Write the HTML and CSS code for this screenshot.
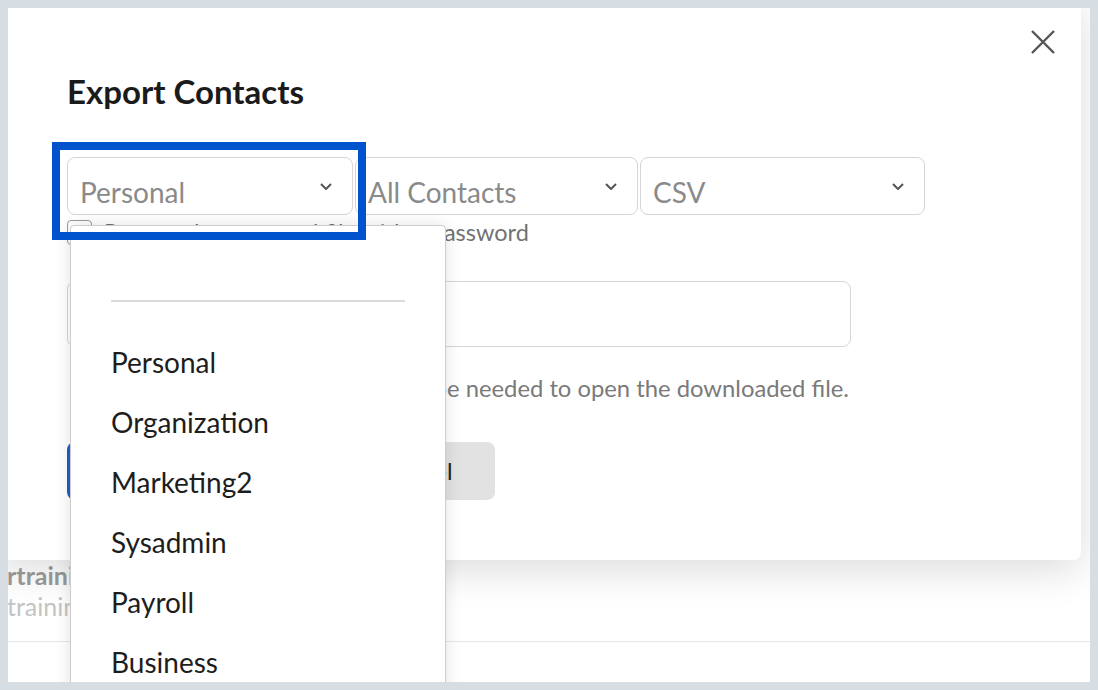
FILE: index.html
```html
<!DOCTYPE html>
<html lang="en">
<head>
<meta charset="UTF-8">
<meta name="viewport" content="width=device-width, initial-scale=1.0">
<title>Export Contacts</title>
<link rel="stylesheet" href="styles.css">
</head>
<body>

<div class="screen">

  <div class="contacts">
    <div class="contact-row">
      <div class="contact-name">rtraining</div>
      <div class="contact-mail">training@zylker.com</div>
    </div>
  </div>

  <div class="modal">
    <div class="modal-top">
      <button class="close-btn" aria-label="Close">
        <svg width="24" height="24" viewBox="0 0 24 24"><path d="M1 1L23 23M23 1L1 23" stroke="#555" stroke-width="2.4" fill="none"/></svg>
      </button>
    </div>

    <h1 class="modal-title">Export Contacts</h1>

    <div class="select-row">
      <div class="select select-open">
        <span>Personal</span>
        <svg class="chevron" width="12" height="7" viewBox="0 0 12 7"><path d="M1 1l5 5 5-5" stroke="#555" stroke-width="2" fill="none"/></svg>

        <div class="dropdown">
          <div class="dropdown-search"></div>
          <ul class="dropdown-list">
            <li>Personal</li>
            <li>Organization</li>
            <li>Marketing2</li>
            <li>Sysadmin</li>
            <li>Payroll</li>
            <li>Business</li>
          </ul>
        </div>
        <div class="focus-mark"></div>
      </div>
      <div class="select">
        <span>All Contacts</span>
        <svg class="chevron" width="12" height="7" viewBox="0 0 12 7"><path d="M1 1l5 5 5-5" stroke="#555" stroke-width="2" fill="none"/></svg>
      </div>
      <div class="select">
        <span>CSV</span>
        <svg class="chevron" width="12" height="7" viewBox="0 0 12 7"><path d="M1 1l5 5 5-5" stroke="#555" stroke-width="2" fill="none"/></svg>
      </div>
    </div>

    <label class="check-row">
      <span class="checkbox"></span>
      <span>Protect the exported file with a password</span>
    </label>

    <input class="password-input" type="password">

    <p class="hint">Remember this password as it will be needed to open the downloaded file.</p>

    <div class="actions">
      <button class="btn btn-primary">Export</button>
      <button class="btn btn-cancel">Cancel</button>
    </div>
  </div>

</div>

</body>
</html>
```

FILE: styles.css
```css
body {
  margin: 0;
  padding: 8px;
  background-color: #d6dee4;
  font-family: Lato, "Open Sans", sans-serif;
}

.screen {
  position: relative;
  width: 1082px;
  height: 674px;
  background-color: #fff;
  overflow: hidden;
}

/* page behind the dialog */
.contacts {
  padding-top: 552px;
}
.contact-row {
  padding: 0 0 18px 0;
  margin-left: -1px;
  border-bottom: 1px solid #e6e6e6;
}
.contact-name {
  font-size: 25px;
  line-height: 30px;
  font-weight: bold;
  color: #9c9c9c;
}
.contact-mail {
  font-size: 25px;
  line-height: 33px;
  color: #c4c4c4;
}

/* dialog */
.modal {
  position: absolute;
  left: -12px;
  top: -12px;
  width: 1085px;
  box-sizing: border-box;
  padding: 34px 26px 60px 71px;
  background-color: #fff;
  border-radius: 8px;
  box-shadow: 0 10px 40px rgba(0, 0, 0, 0.14);
}

.modal-top {
  display: flex;
  justify-content: flex-end;
  height: 24px;
}
.close-btn {
  padding: 0;
  border: none;
  background: none;
  width: 24px;
  height: 24px;
}
.close-btn svg {
  display: block;
}

.modal-title {
  margin: 17px 0 0 0;
  font-size: 33px;
  line-height: 40px;
  font-weight: bold;
  color: #1b1b1b;
}

.select-row {
  display: flex;
  gap: 2px;
  margin-top: 46px;
}
.select {
  display: flex;
  justify-content: space-between;
  align-items: flex-start;
  width: 286px;
  height: 58px;
  box-sizing: border-box;
  padding: 17px 12px 0 12px;
  border: 1px solid #d6d6d6;
  border-radius: 8px;
  font-size: 28px;
  line-height: 34px;
  color: #8a8a8a;
}
.select:nth-child(2) {
  width: 283px;
}
.select:nth-child(3) {
  width: 285px;
}
.chevron {
  margin: 8px 8px 0 0;
}
.select-open {
  position: relative;
  z-index: 5;
}

.focus-mark {
  position: absolute;
  left: -16px;
  top: -16px;
  width: 314px;
  height: 98px;
  box-sizing: border-box;
  border: 8px solid #0053cc;
  z-index: 3;
}

.dropdown {
  position: absolute;
  left: 2px;
  top: 67px;
  width: 376px;
  height: 520px;
  box-sizing: border-box;
  padding: 0 40px;
  background-color: #fff;
  border: 1px solid #cdcdcd;
  border-radius: 4px;
  box-shadow: 0 0 16px rgba(0, 0, 0, 0.12);
  z-index: 2;
}
.dropdown-search {
  height: 74px;
  border-bottom: 2px solid #dadada;
}
.dropdown-list {
  list-style-type: none;
  margin: 30px 0 0 0;
  padding: 0;
}
.dropdown-list li {
  font-size: 28px;
  line-height: 60px;
  color: #1d1d1d;
}

.check-row {
  display: flex;
  align-items: center;
  gap: 12px;
  margin-top: 4px;
  font-size: 23.5px;
  line-height: 26px;
  color: #727272;
}
.checkbox {
  width: 25px;
  height: 25px;
  box-sizing: border-box;
  border: 1px solid #999;
  border-radius: 4px;
}

.password-input {
  display: block;
  width: 784px;
  height: 66px;
  box-sizing: border-box;
  margin-top: 36px;
  border: 1px solid #d6d6d6;
  border-radius: 8px;
}

.hint {
  margin: 28px 0 0 0;
  padding-left: 9px;
  font-size: 23.8px;
  line-height: 26px;
  color: #7a7a7a;
}

.actions {
  display: flex;
  gap: 16px;
  margin-top: 41px;
}
.btn {
  height: 58px;
  padding: 0 43px 0 42px;
  border: none;
  border-radius: 8px;
  font-family: Lato, sans-serif;
  font-size: 23.5px;
}
.btn-primary {
  width: 258px;
  background-color: #1f5bd0;
  color: #fff;
}
.btn-cancel {
  background-color: #e2e2e2;
  color: #222;
}
```
